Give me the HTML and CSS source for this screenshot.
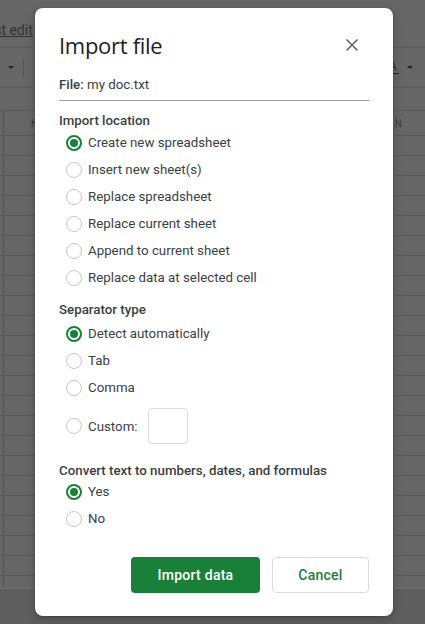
FILE: index.html
```html
<!DOCTYPE html>
<html>
<head>
<meta charset="utf-8">
<link rel="stylesheet" href="styles.css">
</head>
<body>
<div class="sheet">
  <div class="menubar"><div class="lastedit-clip"><span class="lastedit">Last edit</span></div></div>
  <div class="toolbar">
    <span class="tri"></span>
    <span class="tsep"></span>
    <span class="tspace"></span>
    <span class="textcolor"><span class="tc-glyph">A</span><span class="tc-bar"></span></span>
    <span class="tri tri-r"></span>
  </div>
  <div class="formula"></div>
  <div class="colhead">
    <span class="rhcell"></span>
    <span class="colname col-h">H</span>
    <span class="colspacer"></span>
    <span class="colname col-n">N</span>
  </div>
  <div class="rows">
    <div class="row"><span class="rhcell"></span></div>
    <div class="row"><span class="rhcell"></span></div>
    <div class="row"><span class="rhcell"></span></div>
    <div class="row"><span class="rhcell"></span></div>
    <div class="row"><span class="rhcell"></span></div>
    <div class="row"><span class="rhcell"></span></div>
    <div class="row"><span class="rhcell"></span></div>
    <div class="row"><span class="rhcell"></span></div>
    <div class="row"><span class="rhcell"></span></div>
    <div class="row"><span class="rhcell"></span></div>
    <div class="row"><span class="rhcell"></span></div>
    <div class="row"><span class="rhcell"></span></div>
    <div class="row"><span class="rhcell"></span></div>
    <div class="row"><span class="rhcell"></span></div>
    <div class="row"><span class="rhcell"></span></div>
    <div class="row"><span class="rhcell"></span></div>
    <div class="row"><span class="rhcell"></span></div>
    <div class="row"><span class="rhcell"></span></div>
    <div class="row"><span class="rhcell"></span></div>
    <div class="row"><span class="rhcell"></span></div>
    <div class="row"><span class="rhcell"></span></div>
    <div class="row"><span class="rhcell"></span></div>
    <div class="row row-last"><span class="rhcell"></span></div>
  </div>
  <div class="footer"></div>
</div>

<div class="dialog">
  <div class="dlg-head">
    <h1 class="dlg-title">Import file</h1>
    <span class="close" aria-label="Close">
      <svg width="14" height="14" viewBox="0 0 14 14"><path d="M1.5 1.5 L12.5 12.5 M12.5 1.5 L1.5 12.5" stroke="#5f6368" stroke-width="1.6" fill="none"/></svg>
    </span>
  </div>
  <div class="file"><b>File:</b> my doc.txt</div>

  <div class="section section-first">
    <div class="sec-title">Import location</div>
    <div class="radios radios-first">
      <div class="radio"><span class="dot on"></span>Create new spreadsheet</div>
      <div class="radio"><span class="dot"></span>Insert new sheet(s)</div>
      <div class="radio"><span class="dot"></span>Replace spreadsheet</div>
      <div class="radio"><span class="dot"></span>Replace current sheet</div>
      <div class="radio"><span class="dot"></span>Append to current sheet</div>
      <div class="radio"><span class="dot"></span>Replace data at selected cell</div>
    </div>
  </div>

  <div class="section">
    <div class="sec-title">Separator type</div>
    <div class="radios">
      <div class="radio"><span class="dot on"></span>Detect automatically</div>
      <div class="radio"><span class="dot"></span>Tab</div>
      <div class="radio"><span class="dot"></span>Comma</div>
      <div class="radio radio-custom"><span class="dot"></span>Custom:<span class="custom-box"></span></div>
    </div>
  </div>

  <div class="section section-convert">
    <div class="sec-title">Convert text to numbers, dates, and formulas</div>
    <div class="radios radios-convert">
      <div class="radio"><span class="dot on"></span>Yes</div>
      <div class="radio"><span class="dot"></span>No</div>
    </div>
  </div>

  <div class="actions">
    <button class="btn btn-primary">Import data</button>
    <button class="btn btn-secondary">Cancel</button>
  </div>
</div>
</body>
</html>
```
FILE: styles.css
```css
html, body {
  margin: 0;
  padding: 0;
}
body {
  width: 425px;
  height: 624px;
  overflow: hidden;
  position: relative;
  background: #666666;
  font-family: Roboto, "Liberation Sans", Arial, sans-serif;
}

/* background spreadsheet (dimmed) */
.sheet {
  display: flex;
  flex-direction: column;
  height: 624px;
}
.menubar {
  height: 48px;
  border-bottom: 1px solid #5a5a5a;
  display: flex;
  align-items: center;
  box-sizing: border-box;
  padding-top: 12px;
}
.lastedit-clip {
  width: 35px;
  overflow: hidden;
  flex: none;
}
.lastedit {
  display: block;
  margin-left: -21px;
  font-size: 14px;
  color: #333333;
  text-decoration: underline;
  white-space: nowrap;
}
.toolbar {
  height: 39px;
  border-bottom: 1px solid #5a5a5a;
  display: flex;
  align-items: center;
}
.tri {
  width: 0;
  height: 0;
  border-left: 3.5px solid transparent;
  border-right: 3.5px solid transparent;
  border-top: 3.5px solid #222;
  margin-left: 8px;
}
.tsep {
  width: 1px;
  height: 20px;
  background: #555;
  margin-left: 9px;
}
.tspace { flex: 1; }
.textcolor {
  display: flex;
  flex-direction: column;
  align-items: center;
  width: 12px;
  margin-right: 8px;
}
.tc-glyph {
  font-size: 11px;
  line-height: 11px;
  color: #2a2a2a;
}
.tc-bar {
  width: 12px;
  height: 1.5px;
  background: #222;
  margin-top: 1px;
}
.tri-r {
  margin-left: 0;
  margin-right: 12px;
}
.formula {
  height: 22px;
  border-bottom: 1px solid #5a5a5a;
}
.colhead {
  height: 24px;
  border-bottom: 1px solid #585858;
  display: flex;
  align-items: stretch;
}
.rhcell {
  width: 3px;
  border-right: 1px solid #555;
  flex: none;
}
.colname {
  font-size: 10px;
  color: #3a3a3a;
  display: flex;
  align-items: center;
}
.col-h { margin-left: 27px; }
.colspacer { flex: 1; }
.col-n { margin-right: 23px; color: #443a48; }
.rows {
  display: flex;
  flex-direction: column;
}
.row {
  height: 19px;
  border-bottom: 1px solid #585858;
  display: flex;
}
.row-last {
  height: 12px;
  border-bottom: 1px solid #727272;
}
.footer {
  flex: 1;
  background: #5f5f5f;
  border-top: 1px solid #5a5a5a;
}

/* dialog */
.dialog {
  position: absolute;
  left: 35px;
  top: 8px;
  width: 358px;
  box-sizing: border-box;
  padding: 21px 24px 23px 24px;
  background: #ffffff;
  border-radius: 8px;
  box-shadow: 0 4px 8px 3px rgba(0,0,0,0.12), 0 1px 3px rgba(0,0,0,0.2);
  color: #3c4043;
  font-size: 13.3px;
}
.dlg-head {
  display: flex;
  align-items: center;
  justify-content: space-between;
  height: 31px;
}
.dlg-title {
  margin: 0;
  font-family: "Open Sans", Roboto, sans-serif;
  font-weight: 400;
  font-size: 22px;
  line-height: 28px;
  color: #202124;
  letter-spacing: -0.3px;
}
.close {
  display: flex;
  width: 14px;
  height: 14px;
  margin-right: 10px;
  margin-top: 1px;
}
.file {
  margin-top: 15px;
  line-height: 20px;
  padding-bottom: 5px;
  border-bottom: 1px solid #9aa0a6;
  color: #3c4043;
}
.file b { font-weight: 500; }

.section { margin-top: 9px; }
.section-first { margin-top: 10px; }
.section-convert { margin-top: 17px; }
.sec-title {
  font-weight: 500;
  line-height: 20px;
  color: #3c4043;
}
.radios {
  display: flex;
  flex-direction: column;
  padding-left: 7px;
}
.radios-first { margin-top: -2px; }
.radios-convert { margin-top: -3px; }
.radio {
  height: 27px;
  display: flex;
  align-items: center;
  color: #3c4043;
  white-space: nowrap;
}
.dot {
  width: 16px;
  height: 16px;
  box-sizing: border-box;
  border-radius: 50%;
  border: 1px solid #c4c7ca;
  margin-right: 6px;
  flex: none;
  display: flex;
  align-items: center;
  justify-content: center;
}
.dot.on {
  border: 2px solid #188038;
}
.dot.on::after {
  content: "";
  width: 8px;
  height: 8px;
  border-radius: 50%;
  background: #188038;
}
.radio-custom {
  height: 36px;
  margin-top: 7px;
}
.custom-box {
  width: 40px;
  height: 36px;
  box-sizing: border-box;
  border: 1px solid #dadce0;
  border-radius: 4px;
  margin-left: 10px;
}

.actions {
  display: flex;
  justify-content: flex-end;
  gap: 12px;
  margin-top: 25px;
}
.btn {
  height: 36px;
  border-radius: 4px;
  font-family: Roboto, "Liberation Sans", Arial, sans-serif;
  font-size: 14px;
  font-weight: 500;
  letter-spacing: 0.25px;
  cursor: pointer;
}
.btn-primary {
  width: 129px;
  background: #188038;
  color: #ffffff;
  border: none;
}
.btn-secondary {
  width: 97px;
  background: #ffffff;
  color: #188038;
  border: 1px solid #dadce0;
}
```
